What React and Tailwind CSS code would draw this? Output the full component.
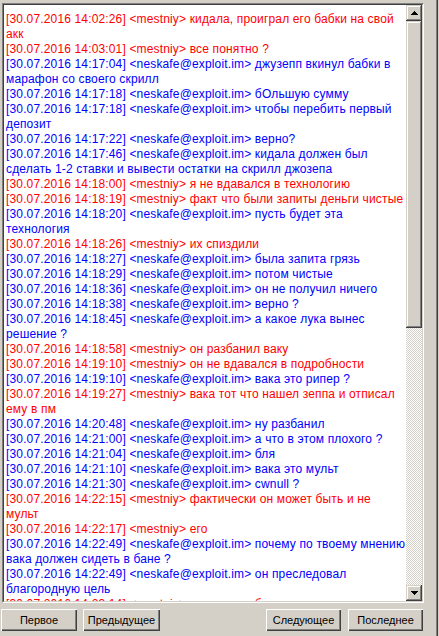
import React from 'react';

const RED = 'mestniy';

// line breaks follow the wrapping of the original log window
const messages = [
  ['14:02:26', 'mestniy', 'кидала, проиграл его бабки на свой\nакк'],
  ['14:03:01', 'mestniy', 'все понятно ?'],
  ['14:17:04', 'neskafe@exploit.im', 'джузепп вкинул бабки в\nмарафон со своего скрилл'],
  ['14:17:18', 'neskafe@exploit.im', 'бОльшую сумму'],
  ['14:17:18', 'neskafe@exploit.im', 'чтобы перебить первый\nдепозит'],
  ['14:17:22', 'neskafe@exploit.im', 'верно?'],
  ['14:17:46', 'neskafe@exploit.im', 'кидала должен был\nсделать 1-2 ставки и вывести остатки на скрилл джозепа'],
  ['14:18:00', 'mestniy', 'я не вдавался в технологию'],
  ['14:18:19', 'mestniy', 'факт что были запиты деньги чистые'],
  ['14:18:20', 'neskafe@exploit.im', 'пусть будет эта\nтехнология'],
  ['14:18:26', 'mestniy', 'их спиздили'],
  ['14:18:27', 'neskafe@exploit.im', 'была запита грязь'],
  ['14:18:29', 'neskafe@exploit.im', 'потом чистые'],
  ['14:18:36', 'neskafe@exploit.im', 'он не получил ничего'],
  ['14:18:38', 'neskafe@exploit.im', 'верно ?'],
  ['14:18:45', 'neskafe@exploit.im', 'а какое лука вынес\nрешение ?'],
  ['14:18:58', 'mestniy', 'он разбанил ваку'],
  ['14:19:10', 'mestniy', 'он не вдавался в подробности'],
  ['14:19:10', 'neskafe@exploit.im', 'вака это рипер ?'],
  ['14:19:27', 'mestniy', 'вака тот что нашел зеппа и отписал\nему в пм'],
  ['14:20:48', 'neskafe@exploit.im', 'ну разбанил'],
  ['14:21:00', 'neskafe@exploit.im', 'а что в этом плохого ?'],
  ['14:21:04', 'neskafe@exploit.im', 'бля'],
  ['14:21:10', 'neskafe@exploit.im', 'вака это мульт'],
  ['14:21:30', 'neskafe@exploit.im', 'cwnull ?'],
  ['14:22:15', 'mestniy', 'фактически он может быть и не\nмульт'],
  ['14:22:17', 'mestniy', 'его'],
  ['14:22:49', 'neskafe@exploit.im', 'почему по твоему мнению\nвака должен сидеть в бане ?'],
  ['14:22:49', 'neskafe@exploit.im', 'он преследовал\nблагородную цель'],
  ['14:23:14', 'mestniy', 'ну так он и был мульт'],
];

const raised =
  'bg-[#d4d0c8] shadow-[inset_-1px_-1px_#404040,inset_1px_1px_#d4d0c8,inset_-2px_-2px_#808080,inset_2px_2px_#ffffff]';

function Arrow({ down }) {
  return (
    <svg width="7" height="4" viewBox="0 0 7 4" className="block">
      <path d={down ? 'M0 0h7L3.5 4z' : 'M3.5 0L7 4H0z'} fill="#000" shapeRendering="crispEdges" />
    </svg>
  );
}

function Scrollbar() {
  return (
    <div className="flex w-[16px] shrink-0 flex-col">
      <div className={`flex h-[16px] items-center justify-center ${raised}`}>
        <Arrow />
      </div>
      <div className={`h-[307px] ${raised}`} />
      <div className="flex-1 bg-[conic-gradient(#ffffff_25%,#d4d0c8_0_50%,#ffffff_0_75%,#d4d0c8_0)] bg-[length:2px_2px]" />
      <div className={`flex h-[16px] items-center justify-center ${raised}`}>
        <Arrow down />
      </div>
    </div>
  );
}

function WinButton({ children, className }) {
  return (
    <button
      className={`h-[22px] bg-[#d4d0c8] text-[11px] text-black shadow-[inset_1px_1px_#ffffff,inset_-1px_-1px_#404040,inset_-2px_-2px_#808080] ${className}`}
    >
      {children}
    </button>
  );
}

export default function App() {
  return (
    <div className="flex h-[636px] w-[439px] overflow-hidden bg-[#d4d0c8] font-['Liberation_Sans',Arial,sans-serif]">
      <div className="flex w-[436px] flex-col">
        <div className="ml-[2px] mt-[3px] h-[600px] w-[422px] border border-b-white border-l-[#808080] border-r-white border-t-[#808080]">
          <div className="flex h-full border border-b-[#d4d0c8] border-l-[#404040] border-r-[#d4d0c8] border-t-[#404040] bg-white">
            <div className="min-w-0 flex-1 overflow-hidden pl-[2px] pt-[7px] text-[12px] leading-[15px] tracking-[0.15px]">
              {messages.map(([time, nick, text], i) => (
                <div
                  key={i}
                  className={`whitespace-pre ${nick === RED ? 'text-[#ff0000]' : 'text-[#0000ff]'}`}
                >
                  [30.07.2016 {time}] &lt;{nick}&gt; {text}
                </div>
              ))}
            </div>
            <Scrollbar />
          </div>
        </div>
        <div className="mt-[6px] flex">
          <WinButton className="ml-[1px] w-[76px]">Первое</WinButton>
          <WinButton className="ml-[6px] w-[77px]">Предыдущее</WinButton>
          <WinButton className="ml-auto w-[75px]">Следующее</WinButton>
          <WinButton className="ml-[7px] mr-[13px] w-[75px]">Последнее</WinButton>
        </div>
      </div>
      <div className="w-[1px] bg-[#808080]" />
      <div className="w-[1px] bg-[#404040]" />
    </div>
  );
}
